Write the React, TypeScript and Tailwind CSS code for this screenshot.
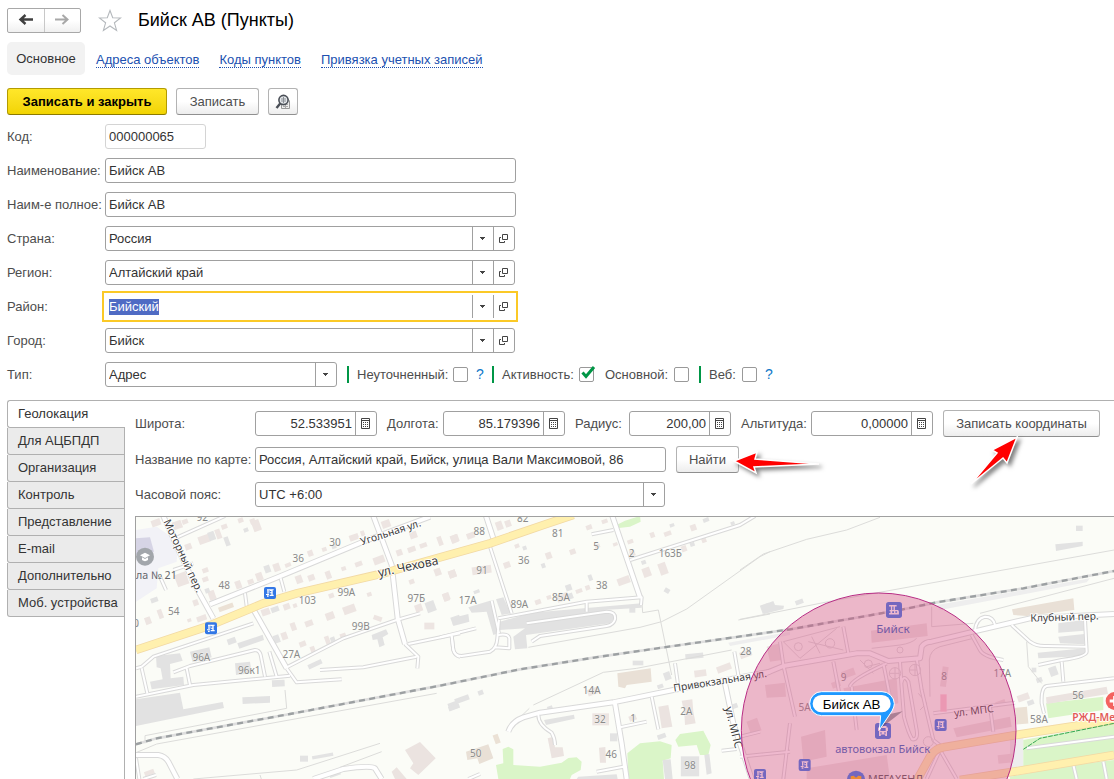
import { useEffect, useRef } from 'react';
import type { ReactNode } from 'react';

/* ---------- icons ---------- */

function ArrowIcon({ flip = false, color }: { flip?: boolean; color: string }) {
  return (
    <svg width="16" height="12" viewBox="0 0 16 12" fill="none" stroke={color} aria-hidden="true">
      {flip ? (
        <path d="M1 5.5H13M8.5 1L13.5 5.5L8.5 10" strokeWidth="2" />
      ) : (
        <path d="M15 5.5H3M7.5 1L2.5 5.5L7.5 10" strokeWidth="2.4" />
      )}
    </svg>
  );
}

function StarIcon() {
  return (
    <svg width="24" height="23" viewBox="0 0 24 23" fill="#fff" stroke="#b4b8bc" strokeWidth="1.1" aria-hidden="true">
      <path d="M12 1.5L14.7 8.8L22.6 9L16.4 13.8L18.6 21.4L12 17L5.4 21.4L7.6 13.8L1.4 9L9.3 8.8Z" />
    </svg>
  );
}

function FindDocIcon() {
  return (
    <svg width="16" height="16" viewBox="0 0 16 16" fill="none" aria-hidden="true">
      <path d="M6.5 9V14.5H14.5V7L12 4" fill="#eee" stroke="#999" />
      <path d="M8 12.5H13M8 10.5H13M10.5 9V14" stroke="#aaa" />
      <circle cx="8.5" cy="6" r="4.6" fill="#e4e7ea" stroke="#4a4f57" strokeWidth="1.6" />
      <path d="M6 5H11M6 7H11M8.5 3V9" stroke="#8b9097" />
      <path d="M5.2 9.5L1.5 14" stroke="#4a4f57" strokeWidth="2.4" />
    </svg>
  );
}

function Caret() {
  return (
    <svg width="5" height="3" viewBox="0 0 5 3" aria-hidden="true">
      <path d="M0 0H5V1H4V2H3V3H2V2H1V1H0Z" fill="#444" />
    </svg>
  );
}

function OpenIcon() {
  return (
    <svg width="9" height="9" viewBox="0 0 9 9" fill="none" stroke="#444" aria-hidden="true">
      <path d="M3.5 0.5H8.5V5.5H3.5ZM2 3.5H0.5V8.5H5.5V7" />
    </svg>
  );
}

function CalcIcon() {
  return (
    <svg width="9" height="11" viewBox="0 0 9 11" aria-hidden="true">
      <path d="M0.5 0.5H8.5V10.5H0.5ZM0.5 2.5H8.5" fill="none" stroke="#444" />
      <path d="M2 4.5H7M2 6.5H7M2 8.5H7" stroke="#444" strokeDasharray="1 1" />
    </svg>
  );
}

/* ---------- form controls ---------- */

const box = 'flex h-[25px] rounded-[3px] border border-[#a0a0a0] bg-white';
const field = 'min-w-0 flex-1 bg-transparent px-[3px] text-[13px] text-[#333] outline-none';
const cell = 'flex w-[21px] shrink-0 items-center justify-center border-l border-[#a0a0a0] pr-px';
const plainButton =
  'h-[27px] rounded-[3px] border border-[#b3b3b3] border-b-[#8f8f8f] bg-linear-to-b from-white from-50% to-[#ededed] text-[13px] text-[#4d4d4d]';

function FormRow({ id, label, children }: { id: string; label: string; children: ReactNode }) {
  return (
    <div className="flex items-center">
      <label htmlFor={id} className="w-[98px] shrink-0 whitespace-nowrap">
        {label}
      </label>
      {children}
    </div>
  );
}

function Reference({ id, value, active = false }: { id: string; value: string; active?: boolean }) {
  const ref = useRef<HTMLInputElement>(null);
  useEffect(() => {
    if (active && ref.current) {
      ref.current.focus();
      ref.current.select();
    }
  }, [active]);
  return (
    <div
      className={
        active
          ? 'flex h-[25px] w-[410px] border border-white bg-white outline-2 outline-offset-1 outline-[#fbc926]'
          : box + ' w-[410px]'
      }
    >
      <div className="flex min-w-0 flex-1 items-center">
        <input
          id={id}
          ref={ref}
          defaultValue={value}
          className={field + ' leading-4 selection:bg-[#4f6bc4] selection:text-white'}
        />
      </div>
      <button type="button" aria-label="Выбрать из списка" className={cell}>
        <Caret />
      </button>
      <button type="button" aria-label="Открыть" className={cell}>
        <OpenIcon />
      </button>
    </div>
  );
}

function Dropdown({ id, value, className }: { id: string; value: string; className: string }) {
  return (
    <div className={box + ' relative ' + className}>
      <select id={id} defaultValue={value} className={field + ' appearance-none'}>
        <option>{value}</option>
      </select>
      <span className="pointer-events-none absolute inset-y-0 right-0 flex w-[21px] items-center justify-center border-l border-[#a0a0a0] pr-px">
        <Caret />
      </span>
    </div>
  );
}

function NumberBox({ id, label, value, labelClass, boxClass }: { id: string; label: string; value: string; labelClass: string; boxClass: string }) {
  return (
    <div className="flex shrink-0 items-center">
      <label htmlFor={id} className={'shrink-0 whitespace-nowrap ' + labelClass}>
        {label}
      </label>
      <div className={box + ' ' + boxClass}>
        <input id={id} defaultValue={value} className={field + ' text-right'} />
        <button type="button" aria-label="Калькулятор" className={cell}>
          <CalcIcon />
        </button>
      </div>
    </div>
  );
}

function Check({ id, label, checked = false, labelClass }: { id: string; label: string; checked?: boolean; labelClass: string }) {
  return (
    <div className="flex items-center">
      <label htmlFor={id} className={'whitespace-nowrap ' + labelClass}>
        {label}
      </label>
      <span className="relative flex">
        <input
          id={id}
          type="checkbox"
          defaultChecked={checked}
          className="peer h-[15px] w-[15px] appearance-none rounded-[2px] border border-[#999] bg-white"
        />
        <svg
          className="pointer-events-none absolute -top-px left-[2px] hidden peer-checked:block"
          width="15"
          height="14"
          viewBox="0 0 15 14"
          fill="none"
          aria-hidden="true"
        >
          <path d="M1.5 6.5L5 10.5L13 1" stroke="#009646" strokeWidth="3" />
        </svg>
      </span>
    </div>
  );
}

function Divider() {
  return <span className="h-[17px] w-[2px] bg-[#009646]" />;
}

function Help({ label }: { label: string }) {
  return (
    <button type="button" aria-label={label} className="w-[8px] text-[14px] text-[#0f78c8]">
      ?
    </button>
  );
}

/* ---------- map ---------- */

type Block = [number, number, number, number, number?];

type Tile = {
  x: number;
  green: string[];
  pink: Block[];
  gray: Block[];
  tan: Block[];
  pinkShapes: string[];
  grayShapes: string[];
  tanShapes: string[];
  wide: string[];
  narrow: string[];
  thin: string[];
};

const west: Tile = {
  x: 0,
  green: [],
  pink: [
    [78, 38, 28, 20], [142, 45, 28, 24], [165, 35, 18, 14], [175, 110, 20, 18], [222, 88, 34, 24], [265, 72, 16, 30], [283, 50, 18, 14],
    [332, 31, 16, 14], [379, 47, 24, 34], [368, 34, 16, 16], [155, 208, 36, 38], [226, 181, 18, 14], [226, 208, 18, 14], [325, 224, 18, 24],
    [362, 215, 18, 14], [388, 200, 20, 24], [440, 172, 20, 24], [474, 165, 18, 12], [541, 130, 16, 18], [583, 118, 14, 12], [672, 82, 28, 18],
    [698, 70, 12, 16], [507, 208, 20, 24], [544, 203, 20, 18], [595, 195, 16, 24], [641, 176, 14, 12], [686, 162, 22, 14], [747, 150, 34, 22],
    [768, 42, 26, 22], [808, 128, 18, 18], [845, 118, 24, 16], [850, 75, 22, 20], [838, 50, 14, 14], [880, 106, 22, 14], [930, 92, 10, 22],
    [973, 87, 20, 24], [845, 215, 16, 14], [923, 186, 20, 22], [967, 192, 22, 22], [948, 262, 18, 24], [898, 348, 30, 20, 0], [866, 294, 22, 22],
    [718, 253, 14, 12], [604, 257, 16, 14], [658, 298, 38, 24], [600, 318, 26, 22], [537, 340, 24, 18], [743, 325, 26, 14, 20], [470, 290, 20, 18],
    [495, 287, 12, 12], [407, 306, 26, 20], [490, 350, 16, 24], [463, 378, 18, 22], [518, 402, 20, 16], [548, 418, 14, 18], [592, 390, 14, 24],
    [640, 380, 18, 20], [197, 278, 16, 18], [246, 256, 20, 28], [215, 325, 30, 16], [178, 331, 12, 10], [91, 312, 14, 28], [54, 332, 18, 22],
    [18, 342, 10, 18], [58, 788, 30, 14],
  ],
  gray: [
    [245, 78, 20, 26], [291, 94, 14, 28], [348, 60, 14, 12], [412, 177, 18, 22], [612, 110, 14, 12], [902, 290, 28, 32],
    [978, 330, 28, 24], [435, 298, 24, 16], [440, 387, 18, 24], [608, 388, 14, 14], [232, 242, 14, 14], [73, 270, 22, 14], [305, 393, 26, 18],
    [445, 520, 38, 20, -3], [555, 463, 44, 14, -25], [970, 587, 30, 22], [522, 746, 24, 18, 0], [578, 738, 64, 10, -10], [614, 790, 34, 18],
  ],
  tan: [[288, 292, 46, 14]],
  pinkShapes: ['825,720 870,696 917,745 865,795 840,775 850,760', '785,785 800,772 830,807 795,807'],
  grayShapes: [
    '78,438 150,430 158,452 120,462 122,505 160,500 162,525 65,538 60,515 98,508 92,475 80,472',
    '180,425 238,412 245,442 188,457',
    '315,460 360,455 365,490 318,495',
    '322,400 398,374 402,390 328,416',
    '337,562 420,558 420,578 338,582',
    '18,568 150,548 160,598 278,576 282,594 18,648',
    '725,375 768,358 775,372 758,382 764,405 748,412 742,388 728,390',
  ],
  tanShapes: [],
  wide: [
    'M100 18L150 130L200 235L250 325', 'M240 283L440 203L700 95L900 20', 'M730 18L785 165L803 325L825 402', 'M370 298L470 475',
    'M18 735H85Q105 738 115 755L142 807', 'M550 807L640 777Q720 765 735 775L755 807',
  ],
  narrow: [
    'M135 85L285 18', 'M452 205L463 245', 'M345 250L350 288', 'M470 475L500 517L635 508', 'M470 472L640 385L800 330L870 310',
    'M18 560L190 525L480 497', 'M18 475L35 470L70 440L370 340', 'M35 475L52 550', 'M170 475L180 525', 'M130 487L180 468L375 420Q388 420 392 435L405 500',
    'M418 425L440 500', 'M570 480L700 472L860 440', 'M825 402L865 440L862 475', 'M835 402L990 370', 'M965 378L970 420Q975 438 990 440',
    'M90 200L108 240', 'M130 180L190 160', 'M18 745L28 807', 'M40 807L78 795',
  ],
  thin: ['M465 540L470 595L45 677V700', 'M18 728L80 702L920 550', 'M190 807L500 780L750 700', 'M630 772L755 725', 'M390 795L394 807'],
};

const center: Tile = {
  x: 930,
  green: [
    '188,717 205,710 220,718 220,765 300,770 365,758 385,744 410,742 425,755 422,780 395,795 390,807 175,807 168,765 190,760',
    '562,730 600,700 660,694 695,705 692,745 668,752 672,807 565,807',
    '706,690 720,672 790,662 812,705 805,735 780,735 770,705 715,710',
    '530,45 555,32 600,18 602,35 570,50 530,55',
  ],
  pink: [
    [0, 93, 14, 28], [44, 86, 24, 22], [92, 77, 24, 18], [178, 47, 20, 26], [204, 41, 18, 20], [231, 108, 14, 12], [326, 137, 18, 20],
    [201, 165, 20, 18], [125, 180, 58, 24, -8], [37, 192, 22, 22], [398, 125, 18, 16], [447, 52, 18, 14], [494, 34, 18, 12], [472, 108, 16, 12],
    [526, 103, 14, 10], [571, 95, 18, 12], [637, 75, 14, 16], [683, 71, 22, 14], [760, 53, 18, 18], [732, 116, 16, 18], [792, 91, 14, 14],
    [669, 176, 24, 36], [620, 187, 24, 28], [551, 212, 38, 22], [417, 243, 20, 12], [443, 233, 14, 14], [294, 276, 18, 14], [327, 262, 14, 12],
    [19, 260, 20, 22], [577, 130, 16, 18], [368, 262, 36, 22], [458, 545, 32, 20], [482, 628, 50, 36, 0], [578, 624, 22, 16], [852, 474, 44, 20],
    [781, 490, 36, 20, -8], [917, 432, 36, 20],
  ],
  gray: [
    [451, 203, 12, 18], [386, 233, 18, 18], [392, 258, 14, 18], [310, 167, 12, 14], [254, 114, 12, 12], [696, 46, 14, 10], [798, 30, 18, 12],
    [611, 157, 14, 12], [681, 242, 16, 14, 30], [977, 295, 28, 26], [763, 438, 54, 16, -6], [594, 459, 32, 14, 0], [682, 498, 20, 24], [661, 529, 18, 12],
    [577, 300, 18, 16, 0], [122, 548, 16, 14], [66, 568, 44, 16], [42, 592, 34, 14], [521, 682, 22, 24, 0], [665, 679, 26, 14], [330, 594, 16, 12],
    [110, 245, 18, 10], [878, 40, 12, 10], [757, 103, 14, 12], [884, 588, 18, 14], [750, 769, 55, 60, 0],
  ],
  tan: [[170, 687, 16, 28]],
  pinkShapes: [
    '655,590 685,585 697,650 665,655', '725,572 757,568 760,605 767,640 735,645 733,610', '323,685 340,680 345,712 368,712 372,738 335,745',
    '477,713 496,711 498,758 480,758',
  ],
  grayShapes: [
    '85,292 150,272 175,370 160,375 140,305 95,308', '168,268 190,262 212,310 185,315',
    '180,335 275,308 605,280 605,293 490,300 530,315 510,340 258,375 262,415 225,418 220,380 255,355 180,360',
    '34,325 85,312 88,335 40,348', '312,630 402,614 404,626 318,645', '668,750 692,748 698,807 675,807', '793,735 808,732 815,790 800,794',
    '415,800 530,793 533,807 410,807',
  ],
  tanShapes: ['532,490 632,475 635,515 560,525 555,535 535,530', '78,725 145,703 160,745 118,762 112,745 82,750'],
  wide: [
    'M138 18L160 85', 'M517 18L600 262', 'M205 665Q215 635 250 622L300 608L520 577L700 540L990 485', 'M525 580L545 700L560 807', 'M855 520L880 640L935 807',
  ],
  narrow: [
    'M150 110L215 310', 'M175 325L440 275L605 262L603 285', 'M570 150L900 45L945 18', 'M455 73L520 60', 'M0 382L108 355',
    'M35 378L40 420Q45 438 65 438L150 425Q170 415 172 385L177 330', 'M155 272L177 370', 'M175 375Q205 370 208 385V415L165 412',
    'M260 340L500 305Q528 305 525 328Q520 345 500 348L300 378L275 395', 'M440 275V305', 'M295 615Q295 645 335 668Q345 685 345 705',
    'M540 652L620 635', 'M635 560L655 658', 'M705 460L715 530', 'M883 425L895 495', 'M845 722L890 717', 'M470 785L550 770', 'M85 807L120 792',
  ],
  thin: [
    'M990 125L960 140L740 297L665 335L600 352L265 412', 'M280 585L490 487L590 475L875 420', 'M605 262L608 308L655 300L695 495', 'M895 330L990 312', 'M268 595L240 622',
  ],
};

const east: Tile = {
  x: 1830,
  green: [
    '918,580 1090,560 1090,600 925,625', '850,690 1122,640 1122,735 850,775', '810,800 1000,765 1122,750 1122,807 810,807',
  ],
  pink: [
    [325, 490, 40, 22], [613, 500, 18, 60, 8], [42, 648, 34, 40], [797, 746, 46, 26, -6], [850, 562, 36, 20], [288, 523, 26, 18],
    [782, 580, 30, 16],
  ],
  gray: [
    [178, 276, 24, 14], [1018, 55, 20, 16, 0], [940, 484, 24, 28], [882, 480, 14, 14, 0], [898, 510, 18, 14], [872, 578, 20, 14],
  ],
  tan: [[845, 617, 36, 50, -5]],
  pinkShapes: [
    '393,362 560,340 563,378 395,398', '183,680 255,660 260,740 190,755', '640,655 810,620 815,650 650,682', '918,562 1100,530 1104,552 920,582',
    '200,775 440,735 450,807 200,807', '75,525 135,518 138,560 80,563', '80,410 120,400 125,450 90,455', '310,535 470,505 475,580 330,610',
  ],
  grayShapes: [
    '62,287 100,273 105,285 132,287 130,297 72,312', '946,103 1028,95 1028,108 948,123', '955,340 1030,330 1033,362 955,368',
    '955,380 1033,372 1033,403 960,400', '893,428 1035,415 1035,438 895,445',
  ],
  tanShapes: ['816,298 1000,265 1003,300 860,318 820,315'],
  wide: ['M60 497L130 468L350 430L390 430L445 453L540 445L545 410Q555 395 575 395L700 365L870 325L1122 312'],
  narrow: [
    'M120 395L130 465L165 620', 'M280 455L300 560', 'M330 530Q330 510 440 460', 'M310 350L325 430', 'M430 460L450 560', 'M705 362Q708 325 735 320Q760 320 765 345',
    'M815 345L870 395Q890 410 920 408L1038 410', 'M1035 330L1040 425Q1040 440 965 450L895 465', 'M965 455L970 515', 'M1122 505L920 528Q903 532 905 580L912 610',
    'M695 375L720 420Q730 440 790 450', 'M580 610L825 578', 'M750 590L760 665', 'M0 740L150 725', 'M0 680L60 665', 'M335 530L350 660', 'M1000 765L1010 807', 'M1090 755L1100 807',
    'M600 720L560 807', 'M600 720L650 807', 'M860 715L1122 680', 'M150 640L130 807', 'M530 445L545 540L580 690L605 710', 'M480 455L484 520Q490 490 505 515L530 660Q535 690 517 688Q505 670 492 620L484 520',
  ],
  thin: [
    'M0 180L70 132L200 88L320 60L420 22', 'M0 328L280 272L1122 120', 'M720 310L1122 205', 'M860 395L865 470L905 520', 'M570 560L568 450Q570 420 600 410L700 385', 'M575 290V350L700 340',
    'M130 395L300 350M180 445L290 355M215 380L240 430M130 395L180 445M205 395L310 420', 'M448 490H482M465 473V507M508 480H542M525 463V497',
    'M395 415L480 405Q515 400 530 385M360 450L400 490M380 470L420 460M535 550L560 580L540 600',
  ],
};

const tiles = [west, center, east];

function Blocks({ items, fill }: { items: Block[]; fill: string }) {
  return (
    <>
      {items.map(([x, y, w, h, r = -20], i) => (
        <rect key={i} x={x - w / 2} y={y - h / 2} width={w} height={h} fill={fill} transform={`rotate(${r} ${x} ${y})`} />
      ))}
    </>
  );
}

function Shapes({ items, fill }: { items: string[]; fill: string }) {
  return (
    <>
      {items.map((points) => (
        <polygon key={points} points={points} fill={fill} />
      ))}
    </>
  );
}

function Lines({ items, stroke, width }: { items: string[]; stroke: string; width: number }) {
  return <path d={items.join('')} fill="none" stroke={stroke} strokeWidth={width} strokeLinejoin="round" />;
}

const stopGlyphs = {
  stop: 'M9 7H29V10H26V23H29V27H17V23H22V19H17V10H14V20H10V10H9ZM18 12V16H22V12ZM6 21H15V24H6ZM9 25H14V29H9Z',
  station: 'M7 7H24V10H20V18H27Q29 19 29 22V28H7V25H10V21H8V18H11V10H7ZM14 10V18H17V10ZM14 21V25H18V21ZM21 21V24H25V21Z',
  bus: 'M10 7H26V10H29V18H27V29H23V26H13V29H9V18H7V10H10ZM12 11V18H24V11ZM12 21V24H15V21ZM21 21V24H24V21Z',
};

function Stop({ x, y, size = 36, kind = 'stop' }: { x: number; y: number; size?: number; kind?: keyof typeof stopGlyphs }) {
  return (
    <g transform={`translate(${x - size / 2} ${y - size / 2}) scale(${size / 36})`}>
      <rect width="36" height="36" rx="6" fill="#3277e6" />
      <path d={stopGlyphs[kind]} fill="#fff" fillRule="evenodd" />
    </g>
  );
}

type MapLabel = [string, number, number];

const houseNumbers: MapLabel[] = [
  ['92', 217, 33], ['30', 615, 108], ['36', 505, 156], ['48', 283, 237], ['54', 131, 316], ['103', 532, 283], ['99А', 649, 258], ['97Б', 859, 276],
  ['99В', 692, 361], ['27А', 484, 444], ['96А', 214, 453], ['96к1', 358, 491], ['0', 18, 352],
  ['88', 1048, 74], ['82', 1178, 37], ['81', 1283, 82], ['5', 1398, 120], ['2', 1505, 142], ['163Б', 1621, 142], ['36', 1181, 161], ['91', 1056, 192],
  ['38', 1415, 236], ['17А', 1013, 281], ['89А', 1168, 295], ['85А', 1293, 274], ['28', 1847, 436], ['14А', 1385, 553], ['32', 1410, 640],
  ['1', 1509, 637], ['2А', 1669, 616], ['50', 1037, 742], ['46', 1444, 745], ['98', 1680, 777],
  ['9', 2141, 513], ['8', 2442, 511], ['17А', 2617, 500], ['5А', 2024, 604], ['56', 2844, 566], ['58А', 2727, 638],
];

const streets: [string, number, number, number, number][] = [
  ['Моторный пер.', 150, 142, 65, 32], ['Угольная ул.', 785, 77, -18, 31], ['ул. Чехова', 837, 182, -12, 37], ['Привокзальная ул.', 1772, 523, -9, 31],
  ['ул. МПС', 1800, 655, 76, 33], ['ул. МПС', 2533, 613, -7, 31], ['Клубный пер.', 2804, 332, -2, 31],
];

function TownMap() {
  const rail = 'M18 703L80 685L480 612L930 527L1170 478L1410 440L1630 408L1980 358L2310 300L2420 277L2680 235L2952 183';
  const chekhova = 'M18 420L230 350L400 280L500 250L760 190L930 142L1080 100L1240 45L1330 15';
  const eastRoads = 'M2350 830L2400 740Q2415 715 2440 712L2658 675L2952 630M2490 810L2640 787L2952 735';
  return (
    <svg
      viewBox="18 21 2934 786"
      className="block w-full bg-[#fbfcf7] font-['Noto_Sans','Open_Sans',sans-serif]"
      role="img"
      aria-label="Карта: Бийск АВ"
    >
      <path d="M18 60L80 50L145 95L140 155L85 175L80 235L18 275Z" fill="#f2f2f7" />
      <path d="M18 85L60 82L72 125L18 135Z" fill="#d6d4e5" />
      <path d="M2420 285L2680 240L2880 205L2870 217L2430 300ZM1795 398L1980 365V375L1800 408ZM2680 680L2680 790L2640 800V690Z" fill="#eeeeee" />
      {tiles.map((t) => (
        <g key={t.x} transform={`translate(${t.x} 0)`}>
          <Shapes items={t.green} fill="#daf5c8" />
          <Blocks items={t.pink} fill="#ede5e2" />
          <Shapes items={t.pinkShapes} fill="#ebe3e0" />
          <Blocks items={t.gray} fill="#e3e3e3" />
          <Shapes items={t.grayShapes} fill="#e2e2e2" />
          <Blocks items={t.tan} fill="#ebe1d5" />
          <Shapes items={t.tanShapes} fill="#e9e0d6" />
          <Lines items={t.thin} stroke="#dcdcda" width={3} />
        </g>
      ))}
      {tiles.map((t) => (
        <g key={t.x} transform={`translate(${t.x} 0)`}>
          <Lines items={t.wide} stroke="#d9d9d9" width={18} />
          <Lines items={t.narrow} stroke="#d9d9d9" width={12} />
        </g>
      ))}
      {tiles.map((t) => (
        <g key={t.x} transform={`translate(${t.x} 0)`}>
          <Lines items={t.wide} stroke="#ffffff" width={12} />
          <Lines items={t.narrow} stroke="#ffffff" width={6} />
        </g>
      ))}
      <path d={chekhova + eastRoads} fill="none" stroke="#f2d9a4" strokeWidth="26" />
      <path d={chekhova + eastRoads} fill="none" stroke="#fff0ae" strokeWidth="21" />
      <path d="M2680 718L2730 685L2952 640" fill="none" stroke="#35a853" strokeWidth="3" strokeDasharray="14 3" />
      <path d={rail} fill="none" stroke="#dedede" strokeWidth="8" />
      <path d={rail} fill="none" stroke="#9ca0a2" strokeWidth="7" strokeDasharray="18 13" />
      <g fill="none" stroke="#dcdcda" strokeWidth="3">
        <circle cx="2295" cy="490" r="17" />
        <circle cx="2355" cy="480" r="17" />
        <circle cx="2395" cy="695" r="15" />
        <circle cx="2215" cy="462" r="12" />
        <circle cx="2005" cy="410" r="12" />
        <circle cx="2100" cy="400" r="14" />
        <circle cx="2310" cy="420" r="9" />
      </g>
      <rect x="2431" y="553" width="19" height="52" fill="#f9c9d3" />

      <g fontSize="30" fill="#8a8a8a" stroke="#fbfcf7" strokeWidth="3" strokeOpacity="0.6" textAnchor="middle" paintOrder="stroke">
        {houseNumbers.map(([text, x, y]) => (
          <text key={`${x}-${y}`} x={x} y={y}>
            {text}
          </text>
        ))}
      </g>
      <g fill="#3c3c3c" stroke="#ffffff" strokeWidth="5" textAnchor="middle" paintOrder="stroke">
        {streets.map(([text, x, y, angle, size]) => (
          <text key={`${x}-${y}`} x={x} y={y} fontSize={size} transform={`rotate(${angle} ${x} ${y})`}>
            {text}
          </text>
        ))}
      </g>

      <circle cx="45" cy="140" r="27" fill="#a2a6ab" />
      <path d="M30 136L45 128L60 136L45 144ZM36 142V150Q45 157 54 150V142L45 147Z" fill="#fff" />
      <text x="18" y="206" fontSize="32" fill="#63666b">
        ла № 21
      </text>
      <Stop x={243} y={355} />
      <Stop x={420} y={249} />
      <Stop x={2292} y={300} size={48} kind="station" />
      <Stop x={2432} y={645} />
      <Stop x={2024} y={765} />
      <Stop x={1890} y={795} />
      <Stop x={2259} y={663} size={48} kind="bus" />
      <circle cx="2178" cy="809" r="27" fill="#3277e6" />
      <path d="M2162 812V799L2171 797L2178 803L2185 797L2194 799V812Z" fill="#ffb400" />
      <g fontSize="35" textAnchor="middle" fill="#2f62bd">
        <text x="2289" y="368">Бийск</text>
        <text x="2258" y="729" fontSize="33">автовокзал Бийск</text>
      </g>
      <text x="2214" y="818" fontSize="32" fill="#555">МЕГАХЕНД</text>
      <circle cx="2954" cy="573" r="27" fill="#f4625f" />
      <path d="M2954 558V588M2939 573H2969" stroke="#fff" strokeWidth="9" />
      <text x="2827" y="634" fontSize="31" fontWeight="600" fill="#e25c58" stroke="#fff" strokeWidth="4" paintOrder="stroke">
        РЖД-Медицина
      </text>

      <circle cx="2246" cy="661" r="412" fill="#d65085" fillOpacity="0.4" stroke="#b82d85" strokeWidth="3" />
      <path d="M2248 658L2280 612L2318 604Z" fill="#4b2b45" fillOpacity="0.4" />
      <path
        d="M2075 545H2256A37 37 0 0 1 2293 581Q2293 590 2286 603L2248 660L2252 617H2075A36 36 0 0 1 2075 545Z"
        fill="#1e98ff"
        stroke="#ffffff"
        strokeWidth="3"
      />
      <rect x="2048" y="555" width="234" height="52" rx="26" fill="#fff" />
      <text x="2165" y="597" fontSize="40" textAnchor="middle" fill="#000" className="font-['Liberation_Sans',sans-serif]">
        Бийск АВ
      </text>
    </svg>
  );
}

/* ---------- page ---------- */

const sections = ['Геолокация', 'Для АЦБПДП', 'Организация', 'Контроль', 'Представление', 'E-mail', 'Дополнительно', 'Моб. устройства'];
const links = ['Адреса объектов', 'Коды пунктов', 'Привязка учетных записей'];

export default function App() {
  return (
    <main className="flex min-h-screen flex-col overflow-hidden bg-white pl-[7px] font-['Liberation_Sans',Arial,sans-serif] text-[13px] text-[#4d4d4d]">
      <header className="mt-[7px] flex h-[26px] items-center">
        <div className="flex h-[25px] w-[74px] rounded-[2px] border border-[#a8a8a8] bg-linear-to-b from-white from-50% to-[#f0f0f0]">
          <button type="button" aria-label="Назад" className="flex flex-1 items-center justify-center border-r border-[#c8c8c8]">
            <ArrowIcon color="#404040" />
          </button>
          <button type="button" aria-label="Вперед" className="flex flex-1 items-center justify-center">
            <ArrowIcon flip color="#a8a8a8" />
          </button>
        </div>
        <button type="button" aria-label="В избранное" className="ml-[17px]">
          <StarIcon />
        </button>
        <h1 className="ml-4 text-[18px] text-black">Бийск АВ (Пункты)</h1>
      </header>

      <nav className="mt-[9px] flex h-[33px] items-center">
        <span className="mr-[11px] flex h-full w-[78px] items-center justify-center rounded-[5px] bg-[#f2f2f2] pt-px text-[#333]">Основное</span>
        <div className="flex gap-5 pt-[3px]">
          {links.map((text) => (
            <a key={text} href="#" className="border-b border-dotted border-[#2050b0] leading-[14px] text-[#2050b0]">
              {text}
            </a>
          ))}
        </div>
      </nav>

      <div className="mt-[13px] flex gap-[9px]">
        <button
          type="button"
          className="h-[27px] w-[160px] rounded-[3px] border border-[#b39b00] border-b-[#8c7a00] bg-linear-to-b from-[#ffe729] to-[#f2d400] text-[13px] font-bold text-black"
        >
          Записать и закрыть
        </button>
        <button type="button" className={plainButton + ' w-[83px]'}>
          Записать
        </button>
        <button type="button" aria-label="Найти в списке" className={plainButton + ' flex w-[30px] items-center justify-center'}>
          <FindDocIcon />
        </button>
      </div>

      <form className="mt-[9px] flex flex-col gap-[9px]">
        <FormRow id="code" label="Код:">
          <div className="flex h-[25px] w-[101px] rounded-[3px] border border-[#d4d4d4]">
            <input id="code" readOnly value="000000065" className={field} />
          </div>
        </FormRow>
        <FormRow id="name" label="Наименование:">
          <div className={box + ' w-[411px]'}>
            <input id="name" defaultValue="Бийск АВ" className={field} />
          </div>
        </FormRow>
        <FormRow id="fullname" label="Наим-е полное:">
          <div className={box + ' w-[411px]'}>
            <input id="fullname" defaultValue="Бийск АВ" className={field} />
          </div>
        </FormRow>
        <FormRow id="country" label="Страна:">
          <Reference id="country" value="Россия" />
        </FormRow>
        <FormRow id="region" label="Регион:">
          <Reference id="region" value="Алтайский край" />
        </FormRow>
        <FormRow id="district" label="Район:">
          <Reference id="district" value="Бийский" active />
        </FormRow>
        <FormRow id="city" label="Город:">
          <Reference id="city" value="Бийск" />
        </FormRow>
        <FormRow id="type" label="Тип:">
          <Dropdown id="type" value="Адрес" className="w-[232px]" />
          <div className="ml-[10px] flex items-center gap-2">
            <Divider />
            <Check id="rough" label="Неуточненный:" labelClass="w-[96px]" />
            <Help label="Справка: неуточненный" />
            <Divider />
            <Check id="enabled" label="Активность:" checked labelClass="w-[77px]" />
            <div className="flex items-center gap-[10px] pl-[3px]">
              <Check id="primary" label="Основной:" labelClass="w-[69px]" />
              <Divider />
            </div>
            <Check id="web" label="Веб:" labelClass="w-[33px]" />
            <Help label="Справка: веб" />
          </div>
        </FormRow>
      </form>

      <section className="mt-[13px] flex flex-1">
        <div className="flex w-[118px] shrink-0 flex-col">
          <div role="tablist" className="flex flex-col">
            {sections.map((name, i) => (
              <button
                key={name}
                type="button"
                role="tab"
                aria-selected={i === 0}
                className={
                  i === 0
                    ? 'h-[28px] rounded-l-[3px] border-y border-l border-[#b0b0b0] bg-white pl-[10px] text-left text-[#333]'
                    : 'h-[27px] rounded-bl-[3px] border-r border-b border-l border-[#b0b0b0] bg-[#ebebeb] pl-[10px] text-left whitespace-nowrap text-[#333]'
                }
              >
                {name}
              </button>
            ))}
          </div>
          <div className="flex-1 border-r border-[#b0b0b0]" />
        </div>

        <div className="flex min-w-0 flex-1 flex-col border-t border-[#b0b0b0] pl-[10px]">
          <div className="mt-[9px] flex h-[27px] items-center gap-[10px]">
            <NumberBox id="lat" label="Широта:" value="52.533951" labelClass="w-[120px]" boxClass="w-[122px]" />
            <NumberBox id="lon" label="Долгота:" value="85.179396" labelClass="w-[56px]" boxClass="w-[122px]" />
            <NumberBox id="radius" label="Радиус:" value="200,00" labelClass="w-[54px]" boxClass="w-[102px]" />
            <NumberBox id="alt" label="Альтитуда:" value="0,00000" labelClass="w-[70px]" boxClass="w-[122px]" />
            <div className="relative shrink-0">
              <button type="button" className={plainButton + ' block w-[157px]'}>
                Записать координаты
              </button>
              <svg
                className="pointer-events-none absolute top-[24px] left-[24px] drop-shadow-[3px_3px_2px_rgba(0,0,0,0.5)]"
                width="56"
                height="56"
                viewBox="0 0 56 56"
                aria-hidden="true"
              >
                <path d="M4 50L30 19L25 16L50 3L40 29L36 24Z" fill="#ff0000" stroke="#fff" strokeWidth="1.5" />
              </svg>
            </div>
          </div>

          <div className="mt-[9px] flex h-[27px] items-center">
            <label htmlFor="mapname" className="w-[120px] shrink-0 whitespace-nowrap">
              Название по карте:
            </label>
            <div className={box + ' w-[411px]'}>
              <input id="mapname" defaultValue="Россия, Алтайский край, Бийск, улица Вали Максимовой, 86" className={field} />
            </div>
            <div className="relative ml-[10px] shrink-0">
              <button type="button" className={plainButton + ' block w-[63px]'}>
                Найти
              </button>
              <svg
                className="pointer-events-none absolute top-[2px] left-[55px] drop-shadow-[3px_3px_2px_rgba(0,0,0,0.5)]"
                width="92"
                height="30"
                viewBox="0 0 92 30"
                aria-hidden="true"
              >
                <path d="M3 13L26 4L24 11L88 16L23 19L25 25Z" fill="#ff0000" stroke="#fff" strokeWidth="1.5" />
              </svg>
            </div>
          </div>

          <div className="mt-2 flex h-[27px] items-center">
            <label htmlFor="zone" className="w-[120px] shrink-0 whitespace-nowrap">
              Часовой пояс:
            </label>
            <Dropdown id="zone" value="UTC +6:00" className="w-[410px]" />
          </div>

          <div className="mt-2 overflow-hidden border-t border-l border-[#a0a0a0]">
            <TownMap />
          </div>
        </div>
      </section>
    </main>
  );
}
